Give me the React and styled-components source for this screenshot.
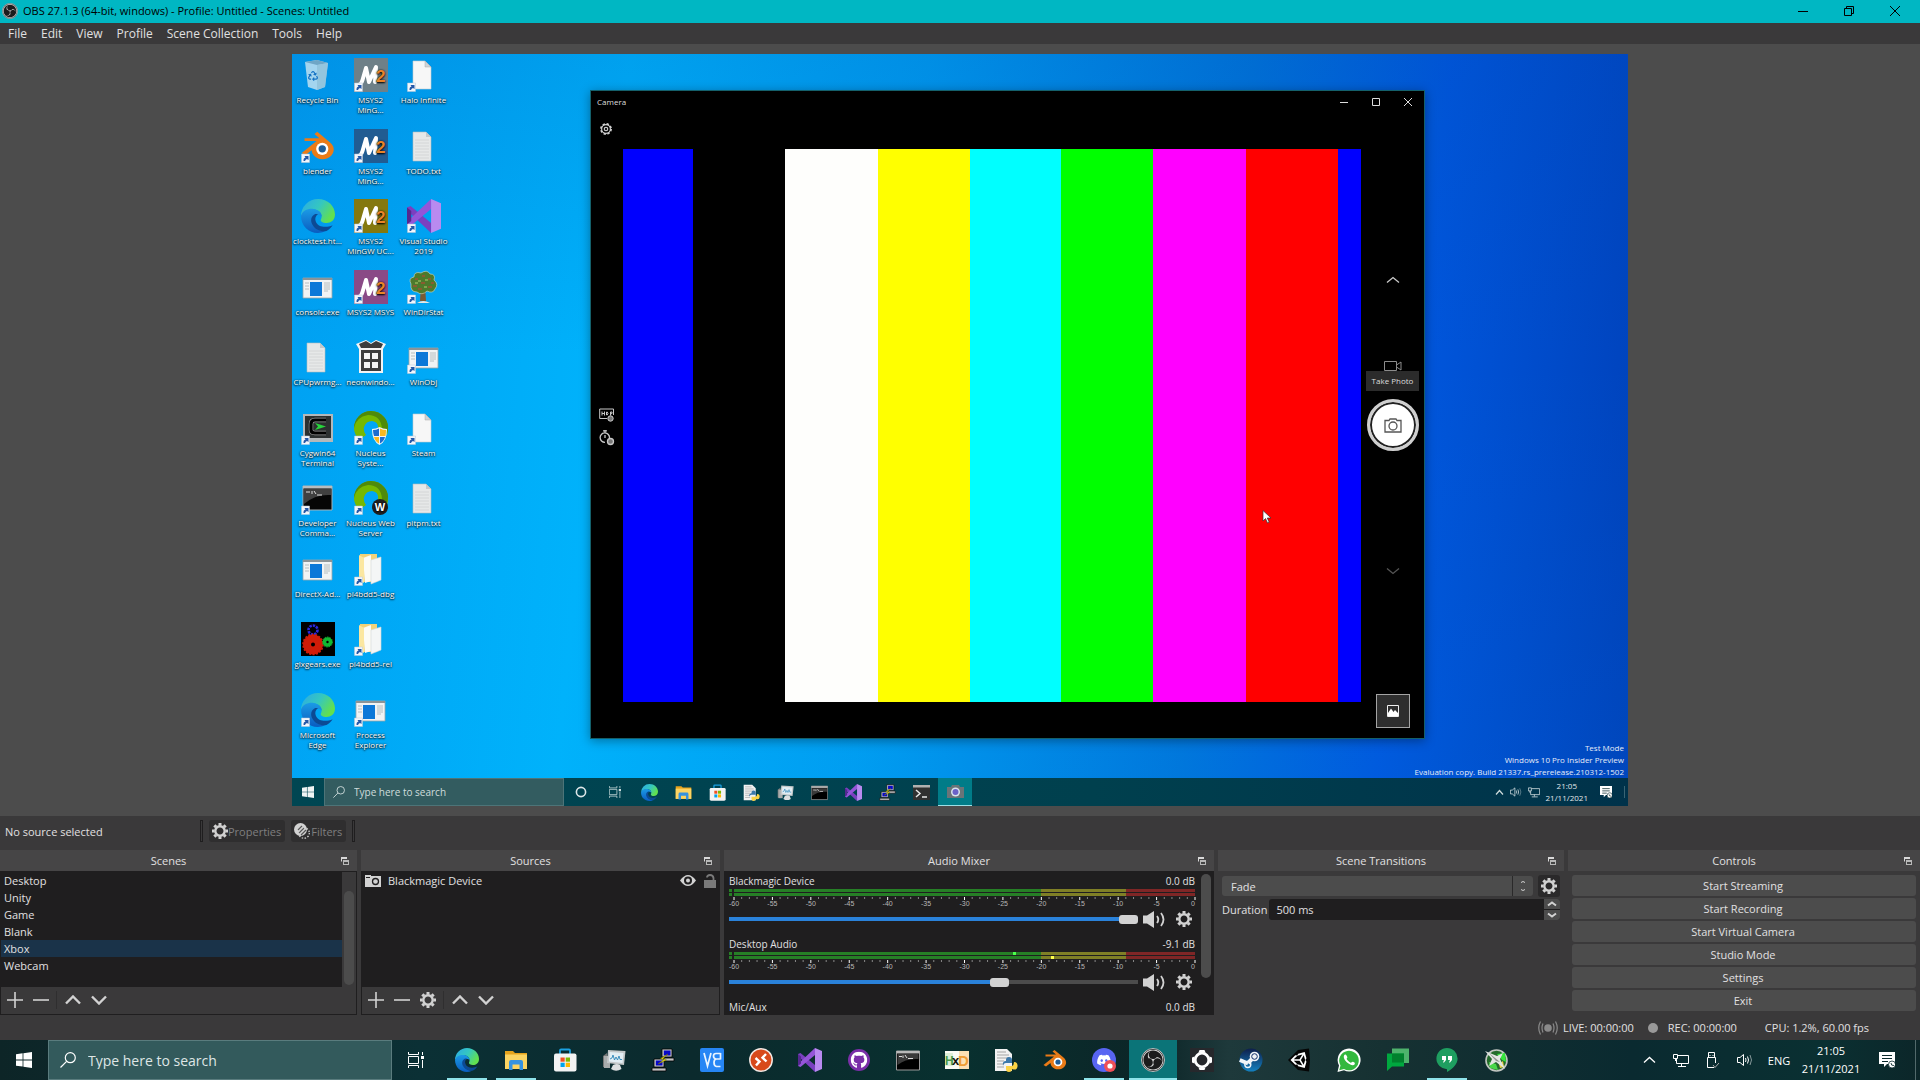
import React from "react";
import styled, { createGlobalStyle, css } from "styled-components";
import { FaGithub, FaSteam, FaUnity, FaDiscord, FaRecycle } from "react-icons/fa";
import { SiObsstudio } from "react-icons/si";

const GlobalStyle = createGlobalStyle`
  * { box-sizing: border-box; }
  body { margin: 0; background: #3a393a; }
  body, button, input, select {
    font-family: "Open Sans", "Noto Sans", sans-serif;
    font-size: 11px;
    line-height: 17px;
  }
  button { border: 0; padding: 0; margin: 0; background: none; color: inherit; }
  input, select { border: 0; margin: 0; }
  svg { display: block; flex: none; }
  ul { list-style: none; margin: 0; padding: 0; }
`;

/* ---------- shared drawings ---------- */

const GearIcon = ({ size = 16, color = "#d2d2d2" }) => (
  <svg width={size} height={size} viewBox="-8 -8 16 16" fill="none" stroke={color}>
    <circle r="4.7" strokeWidth="2.4" />
    {[0, 45, 90, 135, 180, 225, 270, 315].map((a) => (
      <path key={a} d="M0 -5.4V-8" strokeWidth="3" transform={`rotate(${a})`} />
    ))}
  </svg>
);

const ThinGear = () => (
  <svg width="14" height="16" viewBox="-8 -8 16 16" fill="none" stroke="#d0d0d0" strokeWidth="1.3">
    <circle r="5.8" strokeDasharray="2.6 1.95" strokeWidth="2" />
    <circle r="5" />
    <circle r="2" />
  </svg>
);

const Chevron = ({ w = 16, h = 10, down, color = "#d2d2d2", stroke = 2.4 }) => (
  <svg width={w} height={h} viewBox={`0 0 ${w} ${h}`} fill="none" stroke={color} strokeWidth={stroke}>
    <path d={down ? `M1 1.5L${w / 2} ${h - 1.5}L${w - 1} 1.5` : `M1 ${h - 1.5}L${w / 2} 1.5L${w - 1} ${h - 1.5}`} />
  </svg>
);

const PlusIcon = ({ minus }) => (
  <svg width="16" height="16" viewBox="0 0 16 16" stroke="#d2d2d2" strokeWidth="1.6">
    <path d={minus ? "M0 8H16" : "M0 8H16M8 0V16"} />
  </svg>
);

const FloatIcon = () => (
  <svg width="8" height="8" viewBox="0 0 8 8">
    <path d="M0 0H6V2H1V4.5H0Z" fill="#d8d8d8" />
    <path d="M2 3H8V8H2Z" fill="#b8b8b8" />
    <path d="M3 5H7V7H3Z" fill="#444" />
  </svg>
);

const SpeakerIcon = () => (
  <svg width="24" height="17" viewBox="0 0 24 17" fill="#d2d2d2">
    <path d="M0 4.5H4L11 0V17L4 12.5H0Z" />
    <path d="M14 5Q16.5 8.5 14 12M18 2Q23 8.5 18 15" stroke="#d2d2d2" strokeWidth="1.8" fill="none" />
  </svg>
);

const WinLogo = ({ size = 16, color = "#fff" }) => (
  <svg width={size} height={size} viewBox="0 0 16 16" fill={color}>
    <path d="M0 2.2L6.6 1.3V7.5H0ZM7.4 1.2L16 0V7.5H7.4ZM0 8.4H6.6V14.6L0 13.7ZM7.4 8.4H16V16L7.4 14.8Z" />
  </svg>
);

const SearchGlyph = ({ size = 16, color = "#fff" }) => (
  <svg width={size} height={size} viewBox="0 0 16 16" fill="none" stroke={color} strokeWidth="1.2">
    <circle cx="10.3" cy="5.7" r="5" />
    <path d="M6.6 9.3L0.5 15.5" />
  </svg>
);

const TaskView = ({ size = 16, color = "#fff" }) => (
  <svg width={size} height={size} viewBox="0 0 16 16" fill="none" stroke={color} strokeWidth="1">
    <path d="M0.5 4.5H10.5V11.5H0.5ZM0.5 0V2.5H10.5V0M0.5 16V13.5H10.5V16M14.5 0V3M14.5 8V16" />
    <path d="M13 4H16V7H13Z" fill={color} stroke="none" />
  </svg>
);

const EdgeIcon = ({ size = 24 }) => (
  <svg width={size} height={size} viewBox="0 0 24 24">
    <defs>
      <linearGradient id="edgeTop" x1="0" y1="0" x2="1" y2="0.5">
        <stop offset="0" stopColor="#2aa9e8" />
        <stop offset="0.55" stopColor="#35c7c0" />
        <stop offset="1" stopColor="#62e04e" />
      </linearGradient>
      <linearGradient id="edgeBody" x1="0" y1="0" x2="0" y2="1">
        <stop offset="0" stopColor="#1b9be6" />
        <stop offset="1" stopColor="#0a5cc0" />
      </linearGradient>
    </defs>
    <path d="M0 12A12 12 0 0 1 12 0C19 0 24 5 24 11C24 15 21 17 18 17C15.5 17 13.5 16 14 14.5C15.5 12 14 8 10 7.5C5 7 1 10 0 12Z" fill="url(#edgeTop)" />
    <path d="M0 12C1 8 5 6.5 9 7C12.5 7.5 15 10 14.6 12.5C13 10 9 11 8.5 14.5C8 19 12 22.5 17 22.8C9 26.5 0 21 0 12Z" fill="url(#edgeBody)" />
    <path d="M10 10.5C7 12 6.5 15 8 18C10 22 15 23.5 18 22.5C20 21.5 21.5 20 22.3 18.5C18 20.5 12 20 10.5 16C9.7 14 10 12 12 10.5Z" fill="#0c4a94" />
  </svg>
);

const FolderIcon = ({ size = 24 }) => (
  <svg width={size} height={size} viewBox="0 0 24 24">
    <path d="M1 3H9L11 5H23V21H1Z" fill="#e6a31c" />
    <path d="M1 6.5H23V21H1Z" fill="#fcd462" />
    <path d="M5 14Q5 12 7 12H17Q19 12 19 14V22H15.5V16.5H8.5V22H5Z" fill="#3592e0" />
  </svg>
);

const StoreIcon = ({ size = 24 }) => (
  <svg width={size} height={size} viewBox="0 0 24 24">
    <path d="M7 7V2.5Q7 1.5 8 1.5H16Q17 1.5 17 2.5V7" stroke="#1ba1e2" strokeWidth="1.8" fill="none" />
    <rect x="1" y="5.5" width="22.5" height="18" rx="2" fill="#f3f3f3" />
    <path d="M7.5 9.5H11.7V13.7H7.5Z" fill="#f25022" />
    <path d="M12.7 9.5H17V13.7H12.7Z" fill="#7fba00" />
    <path d="M7.5 14.7H11.7V19H7.5Z" fill="#00a4ef" />
    <path d="M12.7 14.7H17V19H12.7Z" fill="#ffb900" />
  </svg>
);

const MonitorIcon = ({ size = 24 }) => (
  <svg width={size} height={size} viewBox="0 0 24 24">
    <path d="M1 8L5 5V20L1 19Z" fill="#777" />
    <path d="M2 8H8V20H2Z" fill="#a9acac" />
    <path d="M6 2L23.5 3L22 17L5 15Z" fill="#c4c8c9" />
    <path d="M7.500 4L21.500 5L20.500 15L7 13.500Z" fill="#e2eef4" />
    <path d="M8 11L10 10L11 7L12.500 12L14 9L15.500 12L17 8L18 11.500H20" stroke="#2c86b8" fill="none" strokeWidth="0.9" />
    <path d="M11 17Q15 15 18 17L19.500 21Q14 24.500 9 21Z" fill="#dcdfe0" />
  </svg>
);

const PuttyIcon = ({ size = 24 }) => (
  <svg width={size} height={size} viewBox="0 0 24 24">
    <path d="M11 1H21V9H11ZM13 10H23V13H13Z" fill="#c4c4c4" stroke="#000" strokeWidth="0.8" />
    <path d="M12.800 2.500H19.500V7.500H12.800Z" fill="#0808c8" />
    <path d="M3 11H13V19H3ZM1 20H15V23H1Z" fill="#c4c4c4" stroke="#000" strokeWidth="0.8" />
    <path d="M4.800 12.500H11.500V17.500H4.800Z" fill="#0808c8" />
    <path d="M17 6L9.500 10.500L13 11.500L7 16L15.500 12L12 10.500Z" fill="#f8ee10" stroke="#6a6400" strokeWidth="0.5" />
  </svg>
);

const VncIcon = () => (
  <svg width="24" height="24" viewBox="0 0 24 24">
    <rect width="24" height="24" rx="2" fill="#2686f5" />
    <path d="M4 5L7.500 18L11 5M20.500 5.500H16Q13.500 5.500 13.500 8T16 11H20.500M20.500 11H16.500Q14 11 14 14.500T16.500 18.500H20.500M20.500 5V11.500" stroke="#e8f4ff" strokeWidth="1.7" fill="none" />
  </svg>
);

const RemoteIcon = () => (
  <svg width="24" height="24" viewBox="0 0 24 24">
    <circle cx="12" cy="12" r="11.2" fill="#d8491a" stroke="#f2e8e4" strokeWidth="1.5" />
    <path d="M6.500 10L10.500 13.500L7 17.500M17 6L13.500 9.700L17.500 13.500" stroke="#fff" strokeWidth="2.4" fill="none" />
  </svg>
);

const VsIcon = ({ size = 24 }) => (
  <svg width={size} height={size} viewBox="0 0 24 24">
    <path d="M0 6L2.500 5L17 17V24L0 8Z" fill="#7a3fc0" />
    <path d="M0 18L2.500 19L17 7V0L0 16Z" fill="#9455d8" />
    <path d="M0 6L3 8.500V15.500L0 18Z" fill="#55288f" />
    <path d="M17 0L24 3V21L17 24Z" fill="#b98af0" />
  </svg>
);

const TerminalIcon = ({ size = 24 }) => (
  <svg width={size} height={size} viewBox="0 0 24 24">
    <path d="M0.5 3H23.500V22H0.500Z" fill="#000" stroke="#9a9a9a" />
    <path d="M0.5 3H23.500V5.500H0.500Z" fill="#b9b9b9" />
    <path d="M1.500 6H22.500V11Q10 10 1.500 17Z" fill="#3a3a3a" />
    <path d="M3 8.500H6M7 7.500V10M9 7L11 10M12 10.500H17" stroke="#ddd" strokeWidth="1" fill="none" />
  </svg>
);

const HxdIcon = () => (
  <svg width="24" height="24" viewBox="0 0 24 24">
    <path d="M0 3H24V21H0Z" fill="#fbfbf4" />
    <path d="M0 5H8V18H0Z" fill="#dcefd8" />
    <path d="M14 3H24V21H14Z" fill="#fbe0b4" />
    <text x="0" y="17" fontSize="12" fontWeight="700" fontFamily="Liberation Sans, sans-serif" fill="#4a9a4c">H</text>
    <text x="7" y="17" fontSize="13" fontWeight="700" fontFamily="Liberation Sans, sans-serif" fill="#16140c">x</text>
    <text x="13" y="18" fontSize="15" fontWeight="700" fontFamily="Liberation Sans, sans-serif" fill="#ee9d35">D</text>
  </svg>
);

const PyFileIcon = ({ size = 24 }) => (
  <svg width={size} height={size} viewBox="0 0 24 24">
    <path d="M1 1H13L18 6V23H1Z" fill="#f2f2f2" />
    <path d="M3 4H12M3 7H15M3 10H15M3 13H10M3 16H10M3 19H10" stroke="#a4a4a4" strokeWidth="1" />
    <path d="M12 12Q12 9 15 9T18 12V15H12Q9.500 15 9 18Q8 13 12 13Z" fill="#3c78aa" />
    <path d="M15 24Q12 24 12 21V18H18Q20 17 20 14Q24 14 23.500 18.500T18 21Q18 24 15 24Z" fill="#fbd244" />
  </svg>
);

const DiscordIcon = () => (
  <svg width="24" height="24" viewBox="0 0 24 24">
    <circle cx="12" cy="12" r="12" fill="#5865f2" />
    <g transform="translate(4.500 4.500)"><FaDiscord size={15} color="#fff" /></g>
    <circle cx="18" cy="18" r="6" fill="#ef4f58" />
    <circle cx="18" cy="18" r="2.6" fill="#fff" />
  </svg>
);

const ObsIcon = ({ size = 24 }) => (
  <svg width={size} height={size} viewBox="0 0 24 24">
    <circle cx="12" cy="12" r="11.5" fill="#1c1b1c" stroke="#e0e0e0" strokeWidth="0.8" />
    <g transform="translate(1.500 1.500)"><SiObsstudio size={21} color="#d4d4d4" /></g>
  </svg>
);

const KnotIcon = () => (
  <svg width="24" height="24" viewBox="-12 -12 24 24">
    <path d="M-12 -12H12V12H-12Z" fill="#26282c" />
    <circle r="6.8" fill="none" stroke="#fff" strokeWidth="2.8" />
    {[0, 90, 180, 270].map((a) => (
      <path key={a} d="M-3.500 -7.500L-2.500 -10H2.500L3.500 -7.500Z" fill="#fff" transform={`rotate(${a})`} />
    ))}
  </svg>
);

const SteamIcon = () => (
  <svg width="24" height="24" viewBox="0 0 24 24">
    <defs>
      <linearGradient id="steamBg" x1="0" y1="0" x2="0" y2="1">
        <stop offset="0" stopColor="#0e1f4c" />
        <stop offset="1" stopColor="#1481c0" />
      </linearGradient>
    </defs>
    <circle cx="12" cy="12" r="11.5" fill="url(#steamBg)" />
    <path d="M0.800 12L9 15.500M9 15L15.500 8.500" stroke="#f0f4f8" strokeWidth="4" />
    <circle cx="15.500" cy="8.500" r="4.800" fill="#f0f4f8" />
    <circle cx="15.500" cy="8.500" r="2.800" fill="#f0f4f8" stroke="#12306a" strokeWidth="1" />
    <circle cx="8.800" cy="16.500" r="3" fill="none" stroke="#f0f4f8" strokeWidth="1.4" />
  </svg>
);

const UnityIcon = () => (
  <svg width="24" height="24" viewBox="0 0 24 24">
    <path d="M0 12L10 2L21 0.500L22 12L21 23.500L10 22Z" fill="#050505" />
    <g transform="translate(2 2.500)"><FaUnity size={19} color="#fff" /></g>
  </svg>
);

const WhatsIcon = () => (
  <svg width="24" height="24" viewBox="0 0 24 24">
    <path d="M0.500 24L2 17.500A11.500 11.500 0 1 1 7 22.300Z" fill="#fff" />
    <path d="M2.200 22.300L3.500 17.500A9.800 9.800 0 1 1 7 21Z" fill="#33b83e" />
    <path d="M8 6.500C6 7.500 6.500 11 9.500 14S16.500 18 17.500 16.500C18.500 15 17.500 14.500 16 13.800C15 13.300 14.500 15 13.700 14.700C12 14 10.300 12.300 9.700 11C9.500 10.300 10.700 9.800 10.300 9C9.500 7.300 9 6 8 6.500Z" fill="#fff" />
  </svg>
);

const ChatIcon = () => (
  <svg width="24" height="24" viewBox="0 0 24 24">
    <path d="M6 0.500H23V15H8L6 13Z" fill="#4eb36c" />
    <path d="M1 5.500H18V18.500H6L1 23Z" fill="#00a83f" />
    <path d="M6 5.500H18V14.500H6Z" fill="#00812d" />
  </svg>
);

const HangoutsIcon = () => (
  <svg width="24" height="24" viewBox="0 0 24 24">
    <path d="M12 0A10.600 10.600 0 1 0 12 21.200V24C18 21 22.600 16 22.600 10.600A10.600 10.600 0 0 0 12 0Z" fill="#1e9e60" />
    <path d="M7 8H11V12L9 14.500H8L9 12H7ZM13 8H17V12L15 14.500H14L15 12H13Z" fill="#fff" />
  </svg>
);

const JetIcon = () => (
  <svg width="24" height="24" viewBox="0 0 24 24">
    <circle cx="12.500" cy="12.500" r="10.500" fill="#246b2c" stroke="#c2c6c2" strokeWidth="1.6" />
    <path d="M13 6L21 5L22 14L18 12Z" fill="#35e63c" />
    <path d="M5 14L12 16L14 22L6 20Z" fill="#48d848" />
    <path d="M15 16L19 13L20 19L16 20Z" fill="#f0d34a" />
    <path d="M1 3L13 8L19 5L16 11L21 21L12 14L5 18L8 11Z" fill="#e2e6e2" />
    <path d="M5 5L16 14L12 13Z" fill="#8d928d" />
  </svg>
);

const BlenderIcon = ({ size = 24 }) => (
  <svg width={size} height={size} viewBox="0 0 24 24">
    <path d="M0.500 17L11 8.500H2.500V6.500H13L9.500 3.500L11.500 2L20.500 9.500A7.800 6.800 0 1 1 7.500 15L3 18.500Z" fill="#ea7b17" />
    <circle cx="15" cy="14" r="4.3" fill="#fff" />
    <circle cx="15" cy="14" r="2.6" fill="#1f5d96" />
  </svg>
);

/* ---------- desktop icon drawings (34 x 34) ---------- */

const ShortcutArrow = () => (
  <g>
    <path d="M0.500 25H8.500V33.500H0.500Z" fill="#f2f6fb" stroke="#b8c4d4" strokeWidth="0.5" />
    <path d="M2.500 32C2.500 29.500 3 29 4.500 28.500L3.500 27H7.500V31L6 30Q4.500 30.500 4 32Z" fill="#2458a8" />
  </g>
);

const pics = {
  bin: (
    <g>
      <path d="M4 4L16 2L27 5L24 29L16 32L7 29Z" fill="#b5dcf0" opacity="0.9" />
      <path d="M4 4L16 7L27 5L16 2Z" fill="#6fa6c6" />
      <path d="M16 7V32L24 29L27 5Z" fill="#8fc0da" opacity="0.8" />
      <g transform="translate(7 13)"><FaRecycle size={10} color="#1472c4" /></g>
    </g>
  ),
  page: (
    <g>
      <path d="M6 3H18L24 9V31H6Z" fill="#f7f7f7" stroke="#c4ccd2" strokeWidth="0.6" />
      <path d="M18 3V9H24Z" fill="#cfd3d6" stroke="#aaa" strokeWidth="0.5" />
    </g>
  ),
  text: (
    <g>
      <path d="M6 3H19L24 8V32H6Z" fill="#e6e8e8" stroke="#b4bcc0" strokeWidth="0.6" />
      <path d="M19 3V8H24Z" fill="#c4c8ca" />
      <path d="M8 11H22M8 14H22M8 17H22M8 20H22M8 23H22M8 26H22M8 29H22" stroke="#cfd2d3" strokeWidth="0.8" />
    </g>
  ),
  app: (
    <g>
      <path d="M2 8H31V28H2Z" fill="#f1f3f4" stroke="#9aa4aa" strokeWidth="0.8" />
      <path d="M2 8H31V10H2Z" fill="#8c9498" />
      <path d="M9 12H21V26H9Z" fill="#0c78d8" />
      <path d="M4 13H8M4 16H8M4 19H8M23 13H29M23 15H29M23 17H29M23 19H29M23 21H27" stroke="#a8b0b4" strokeWidth="0.8" />
    </g>
  ),
  gift: (
    <g>
      <path d="M2 4L12 0L17 3L22 0L32 4L29 9V33H5V9Z" fill="#f4f4f4" />
      <path d="M5 4L12 1L17 4L22 1L29 4L27 8H7ZM7 10H27V31H7Z" fill="#3c3c3c" />
      <path d="M10 13H16V19H10ZM18 13H24V19H18ZM10 22H16V28H10ZM18 22H24V28H18Z" fill="#f4f4f4" />
    </g>
  ),
  cygwin: (
    <g>
      <path d="M2 3H32V31H2Z" fill="#b4b8ba" />
      <path d="M4 5H30V27H4Z" fill="#2c3030" />
      <path d="M25 9H14Q10 9 10 13V19Q10 22 14 22H25" stroke="#999" strokeWidth="4.4" fill="none" />
      <path d="M25 9H14Q10 9 10 13V19Q10 22 14 22H25" stroke="#000" strokeWidth="3.2" fill="none" />
      <path d="M14 12L25 15.500L14 19L17 15.500Z" fill="#28d43c" />
    </g>
  ),
  cmd: (
    <g>
      <path d="M2 5H31V29H2Z" fill="#060606" stroke="#a8b0b4" />
      <path d="M2 5H31V7.500H2Z" fill="#b8bcbe" />
      <path d="M3 8H30V14Q14 13 3 23Z" fill="#404040" />
      <path d="M5 11H9M11 10V13M13 10L15 13M16 14H21" stroke="#ddd" fill="none" />
    </g>
  ),
  folder: (
    <g>
      <path d="M6 2H23V30H6Z" fill="#f2d27a" />
      <path d="M9 6L17 3V29L11 31Z" fill="#fbfbf6" />
      <path d="M17 8L27 5V28L17 32Z" fill="#f4f6f6" stroke="#d4d8d8" strokeWidth="0.6" />
      <path d="M5 3L10 6V31L5 28Z" fill="#fbe7a0" />
    </g>
  ),
  gears: (
    <g>
      <path d="M0 0H34V34H0Z" fill="#000" />
      <circle cx="12" cy="8" r="4.5" fill="none" stroke="#2a2ae0" strokeWidth="2.6" strokeDasharray="2.4 1" />
      <circle cx="12" cy="22.500" r="6" fill="none" stroke="#d01c08" strokeWidth="8" />
      <circle cx="12" cy="22.500" r="10" fill="none" stroke="#d01c08" strokeWidth="1.6" strokeDasharray="2 1.5" />
      <circle cx="26.500" cy="20" r="3" fill="none" stroke="#12b832" strokeWidth="3.6" />
      <circle cx="26.500" cy="20" r="5" fill="none" stroke="#12b832" strokeWidth="1" strokeDasharray="1.5 1" />
    </g>
  ),
  tree: (
    <g>
      <path d="M14 16H18L19 31H13Z" fill="#7a5a34" />
      <path d="M10 33Q16 29 23 33Z" fill="#e8e8e4" />
      <path d="M4 14Q1 8 7 7Q7 1 14 3Q20 -1 23 4Q29 4 27 10Q32 14 28 19Q26 24 20 21Q15 26 10 22Q3 22 4 14Z" fill="#4d7a2c" stroke="#d8dcc0" strokeWidth="0.6" />
      <path d="M8 9H11M15 6H18M21 9H24M6 16H10M14 13H18M21 17H25M11 19H15M24 13H27" stroke="#8a5c30" strokeWidth="1.8" />
      <path d="M11 11H14M18 10H21M17 17H20M8 13H11" stroke="#8fb457" strokeWidth="1.5" />
    </g>
  ),
};

const Msys = ({ color }) => (
  <g>
    <path d="M0 0H34V34H0Z" fill={color} />
    <path d="M4 27Q7 27 8.500 22L12 10L15 24L22 9L21 24" stroke="#fff" strokeWidth="4" fill="none" strokeLinejoin="round" strokeLinecap="round" />
    <text x="22" y="24" fontSize="17" fontWeight="700" fontFamily="Liberation Sans, sans-serif" fill="#e88428">2</text>
  </g>
);

const Nucleus = ({ shield }) => (
  <g>
    <path d="M17 0A17 17 0 0 0 5 29L12 24Q9 20 10 16Q12 10 18 10Q25 11 24 18L29 22L33 24Q36 14 30 6Q25 0 17 0Z" fill="#76b900" />
    <path d="M17 0A17 17 0 0 0 0 17Q2 6 14 4Q27 4 28 18L33 22Q36 12 30 6Q25 0 17 0Z" fill="#4f8a0a" />
    {shield ? (
      <g>
        <path d="M18 18Q22 18 25.500 16Q29 18 33 18Q33 30 25.500 34Q18 30 18 18Z" fill="#f4f4f4" />
        <path d="M19 19Q22 19 25 17.500V25H20Q19 22 19 19ZM26 26H31Q30 30 26 32.500Z" fill="#1c6cd0" />
        <path d="M26 17.500Q29 19 32 19Q32 22 31.500 25H26ZM20 26H25V32.500Q21 30 20 26Z" fill="#f8b820" />
      </g>
    ) : (
      <g>
        <circle cx="26" cy="26" r="8" fill="#202020" />
        <text x="26" y="30" textAnchor="middle" fontSize="11" fontWeight="700" fontFamily="Liberation Sans, sans-serif" fill="#fff">W</text>
      </g>
    )}
  </g>
);

const picture = (kind) => {
  if (kind.startsWith("#")) return <Msys color={kind} />;
  if (kind === "edge") return <EdgeIcon size={34} />;
  if (kind === "vs") return <VsIcon size={34} />;
  if (kind === "blender") return <BlenderIcon size={34} />;
  if (kind === "nucShield") return <Nucleus shield />;
  if (kind === "nucWeb") return <Nucleus />;
  return pics[kind];
};

const desktopItems = [
  ["Recycle Bin", "bin", 0], ["blender", "blender", 1], ["clocktest.ht...", "edge", 0], ["console.exe", "app", 0],
  ["CPUpwrmg...", "text", 0], ["Cygwin64\nTerminal", "cygwin", 1], ["Developer\nComma...", "cmd", 1],
  ["DirectX-Ad...", "app", 0], ["glxgears.exe", "gears", 0], ["Microsoft\nEdge", "edge", 1],
  ["MSYS2\nMinG...", "#6e8088", 1], ["MSYS2\nMinG...", "#215c92", 1], ["MSYS2\nMinGW UC...", "#84780f", 1],
  ["MSYS2 MSYS", "#8a4a86", 1], ["neonwindo...", "gift", 0], ["Nucleus\nSyste...", "nucShield", 1],
  ["Nucleus Web\nServer", "nucWeb", 1], ["pi4bdd5-dbg", "folder", 1], ["pi4bdd5-rel", "folder", 1],
  ["Process\nExplorer", "app", 1],
  ["Halo Infinite", "page", 1], ["TODO.txt", "text", 0], ["Visual Studio\n2019", "vs", 1], ["WinDirStat", "tree", 1],
  ["WinObj", "app", 1], ["Steam", "page", 1], ["pitpm.txt", "text", 0],
];

/* ---------- main window ---------- */

const Screen = styled.div`
  display: flex;
  flex-direction: column;
  min-height: 100vh;
  color: #e1e0e1;
  background: #3a393a;
  overflow: hidden;
`;

const TitleBar = styled.header`
  display: flex;
  align-items: center;
  height: 23px;
  padding: 0 2px 2px;
  background: #00b7c3;
  color: #000;
`;

const TitleText = styled.span`
  flex: 1;
  padding-left: 5px;
`;

const WindowButton = styled.button`
  display: flex;
  align-items: center;
  justify-content: center;
  width: ${(p) => (p.$small ? "32px" : "46px")};
  height: 20px;
`;

const MenuBar = styled.nav`
  display: flex;
  height: 21px;
  background: #3a393a;
`;

const MenuItem = styled.button`
  padding: 0 6px 0 8px;
  font-size: 12px;
`;

const Preview = styled.main`
  display: flex;
  flex: 1;
  justify-content: center;
  padding: 10px;
  background: #4c4c4c;
`;

const Canvas = styled.div`
  display: flex;
  flex: 0 1 1336px;
  flex-direction: column;
  position: relative;
  overflow: hidden;
  background:
    linear-gradient(180deg, rgba(0, 70, 170, 0.16), rgba(0, 180, 255, 0) 40%, rgba(0, 180, 255, 0.06)),
    linear-gradient(96deg, #00a0f2 0%, #00b2fb 24%, #009cf0 45%, #0074da 68%, #0056dc 82%, #0040b8 100%);
`;

const IconGrid = styled.ul`
  flex: 1;
  display: grid;
  grid-auto-flow: column;
  grid-template-rows: repeat(10, minmax(0, 1fr));
  grid-auto-columns: 53px;
  justify-content: start;
  padding: 4px 0 15px;
  min-height: 0;
`;

const IconCell = styled.li`
  display: flex;
  flex-direction: column;
  align-items: center;
  gap: 3px;
  width: 51px;
  font-size: 8px;
  line-height: 10px;
  text-align: center;
  white-space: pre;
  color: #fff;
  text-shadow: 0 1px 2px #000, 0 0 2px rgba(0, 0, 0, 0.8);
`;

const Watermark = styled.p`
  position: absolute;
  right: 4px;
  bottom: 28px;
  margin: 0;
  font-size: 8px;
  line-height: 12px;
  text-align: right;
  color: #e6ecf8;
  white-space: pre-line;
`;

const CameraWindow = styled.section`
  position: absolute;
  left: 298px;
  top: 36px;
  width: 835px;
  height: 649px;
  display: grid;
  grid-template: 58px 1fr 37px / 32px 1fr 63px;
  background: #000;
  border: 1px solid #14606c;
  box-shadow: 0 2px 10px rgba(0, 0, 0, 0.35);
  color: #ddd;
`;

const CameraTop = styled.div`
  grid-column: 1 / -1;
  display: flex;
  flex-direction: column;
  gap: 8px;
`;

const CameraTitle = styled.div`
  display: flex;
  align-items: center;
  height: 22px;
  padding-left: 6px;
  font-size: 8px;
  line-height: 10px;
`;

const Grow = styled.span`
  flex: 1;
`;

const CameraSide = styled.div`
  display: flex;
  flex-direction: column;
  align-items: ${(p) => (p.$left ? "flex-start" : "center")};
  ${(p) =>
    p.$left &&
    css`
      justify-content: center;
      gap: 8px;
      padding: 0 0 24px 8px;
    `}
`;

const SideButton = styled.button`
  display: flex;
  align-items: center;
  justify-content: center;
`;

const GearSlot = styled(SideButton)`
  margin-left: 8px;
  align-self: flex-start;
`;

const ColourBars = styled.div`
  display: flex;
  height: 553px;
`;

const Bar = styled.span`
  flex: ${(p) => p.$w} 0 0;
  background: ${(p) => p.$c};
`;

const Tooltip = styled.span`
  padding: 5px 6px;
  background: #2b2b2b;
  font-size: 8px;
  line-height: 10px;
  white-space: nowrap;
`;

const Shutter = styled.button`
  display: flex;
  align-items: center;
  justify-content: center;
  width: 52px;
  height: 52px;
  margin: 8px 0 0;
  border: 3px solid #cfcfcf;
  border-radius: 50%;
  background: #fff;
  box-shadow: inset 0 0 0 2px #222;
`;

const Spacer = styled.span`
  height: ${(p) => p.$h}px;
  flex: none;
`;

const Thumb = styled.button`
  display: flex;
  align-items: center;
  justify-content: center;
  width: 34px;
  height: 34px;
  flex: none;
  border: 1px solid #a4a4a4;
  background: #2e2e2e;
`;

const Pointer = styled.svg`
  position: absolute;
  left: 970px;
  top: 456px;
`;

const InnerTaskbar = styled.footer`
  display: flex;
  height: 28px;
  background: linear-gradient(90deg, #004652, #00404e 60%, #00324a);
`;

const InnerItem = styled.button`
  display: flex;
  align-items: center;
  justify-content: center;
  width: 34px;
  ${(p) =>
    p.$active &&
    css`
      background: #007c88;
      border-bottom: 1px solid #9adfe6;
    `}
`;

const InnerStart = styled(InnerItem)`
  width: 32px;
`;

const InnerSearch = styled.label`
  display: flex;
  align-items: center;
  gap: 9px;
  width: 240px;
  padding-left: 8px;
  background: #335c60;
  border: 1px solid #4d7478;
`;

const InnerInput = styled.input`
  flex: 1;
  min-width: 0;
  padding: 0;
  background: none;
  font-size: 10px;
  &::placeholder { color: #cfdcdc; opacity: 1; }
`;

const InnerTray = styled.div`
  display: flex;
  align-items: center;
  margin-left: auto;
  gap: 6px;
  padding-right: 3px;
`;

const InnerClock = styled.span`
  font-size: 8px;
  line-height: 12px;
  text-align: center;
  color: #e0e8ea;
  white-space: pre-line;
`;

const InnerNote = styled.span`
  padding: 0 12px 0 6px;
  border-right: 1px solid #3a6474;
`;

const ContextBar = styled.div`
  display: flex;
  align-items: center;
  height: 34px;
  padding: 0 0 4px 5px;
`;

const ContextLabel = styled.span`
  width: 195px;
`;

const Divider = styled.span`
  width: 3px;
  height: 22px;
  border: 1px solid #1f1e1f;
`;

const ContextButton = styled.button`
  display: flex;
  align-items: center;
  height: 22px;
  margin: 0 0 0 6px;
  padding: 0 4px 0 3px;
  border-radius: 3px;
  background: #2f2e2f;
  color: #7f7f7f;
  & + & { margin-right: 6px; }
`;

const Docks = styled.div`
  display: grid;
  grid-template-columns: minmax(0, 357fr) minmax(0, 359fr) minmax(0, 490fr) minmax(0, 346fr) minmax(0, 352fr);
  gap: 4px;
  height: 165px;
`;

const Dock = styled.section`
  display: flex;
  flex-direction: column;
  min-height: 0;
`;

const DockTitle = styled.h2`
  display: flex;
  align-items: center;
  height: 21px;
  margin: 0;
  padding-right: 8px;
  background: #464546;
  font-size: 11px;
  font-weight: 400;
`;

const DockName = styled.span`
  flex: 1;
  text-align: center;
  padding-right: 4px;
`;

const ListBox = styled.div`
  display: flex;
  flex: 1;
  min-height: 0;
  flex-direction: column;
  border: 1px solid #1f1e1f;
  background: #1f1e1f;
`;

const ListArea = styled.div`
  display: flex;
  flex: 1;
  min-height: 0;
`;

const List = styled.ul`
  flex: 1;
`;

const SceneItem = styled.li`
  height: 17px;
  padding-left: 3px;
  background: ${(p) => (p.$on ? "#1a3349" : "transparent")};
`;

const ScrollTrack = styled.div`
  width: 14px;
  padding: 19px 2px 2px;
  background: #3a393a;
`;

const ScrollThumb = styled.div`
  width: 10px;
  height: 94px;
  border-radius: 5px;
  background: #4c4c4c;
`;

const Toolbar = styled.div`
  display: flex;
  align-items: flex-start;
  height: 27px;
  padding-left: 1px;
  background: #3a393a;
`;

const ToolButton = styled.button`
  display: flex;
  align-items: center;
  justify-content: center;
  width: 26px;
  height: 26px;
`;

const ToolSep = styled.span`
  width: 1px;
  height: 18px;
  margin: 4px 3px 0 2px;
  background: #2f2e2f;
`;

const SourceRow = styled.li`
  display: flex;
  align-items: center;
  height: 17px;
  padding: 0 2px 0 3px;
  gap: 7px;
`;

const SourceName = styled.span`
  flex: 1;
`;

const Mixer = styled.div`
  display: flex;
  flex: 1;
  min-height: 0;
  overflow: hidden;
  background: #1f1e1f;
  padding: 3px 3px 0 5px;
  gap: 6px;
`;

const Channels = styled.div`
  flex: 1;
  min-width: 0;
`;

const Channel = styled.div`
  height: 63px;
  font-size: 10px;
  line-height: 15px;
`;

const ChannelHead = styled.div`
  display: flex;
  justify-content: space-between;
`;

const Meter = styled.div`
  display: flex;
  position: relative;
  height: 3px;
  margin-bottom: 1px;
`;

const MeterPart = styled.span`
  flex: ${(p) => p.$w} 0 0;
  background: ${(p) => p.$c};
`;

const MeterStart = styled.span`
  width: 3px;
  margin-right: 2px;
  background: #267f26;
`;

const Peak = styled.span`
  position: absolute;
  top: 0;
  width: 3px;
  height: 3px;
  background: ${(p) => p.$c};
`;

const Scale = styled.svg`
  margin-left: 5px;
  width: calc(100% - 5px);
  overflow: visible;
`;

const FaderRow = styled.div`
  display: flex;
  align-items: center;
  height: 18px;
  margin-top: 3px;
  gap: 5px;
`;

const Fader = styled.input`
  appearance: none;
  flex: 1;
  min-width: 0;
  height: 10px;
  background: linear-gradient(#2a82da, #2a82da) 0 50% / ${(p) => p.$v}% 4px no-repeat,
    linear-gradient(#4c4c4c, #4c4c4c) 0 50% / 100% 4px no-repeat;
  &::-webkit-slider-thumb {
    appearance: none;
    width: 19px;
    height: 9px;
    border-radius: 3px;
    background: #d2d2d2;
  }
`;

const IconButton = styled.button`
  display: flex;
  width: ${(p) => p.$w}px;
`;

const MixerThumb = styled(ScrollThumb)`
  height: 104px;
`;

const Panel = styled.div`
  display: flex;
  flex-direction: column;
  gap: 2px;
  padding: 4px;
`;

const PanelRow = styled.div`
  display: flex;
  align-items: center;
  gap: ${(p) => p.$gap}px;
`;

const SelectWrap = styled.div`
  position: relative;
  display: flex;
  flex: 1;
`;

const Select = styled.select`
  appearance: none;
  flex: 1;
  height: 20px;
  padding: 0 9px;
  border-radius: 3px;
  background: #4c4c4c;
  color: #e1e0e1;
`;

const SelectArrows = styled.span`
  position: absolute;
  right: 0;
  top: 0;
  display: flex;
  flex-direction: column;
  align-items: center;
  justify-content: center;
  gap: 4px;
  width: 21px;
  height: 20px;
  border-left: 1px solid #2a292a;
  pointer-events: none;
`;

const DarkButton = styled.button`
  display: flex;
  align-items: center;
  justify-content: center;
  width: 22px;
  height: 22px;
  border-radius: 3px;
  background: #2a292a;
`;

const Duration = styled.div`
  display: flex;
  flex: 1;
  border-radius: 3px;
  overflow: hidden;
  background: #1f1e1f;
`;

const DurationInput = styled.input`
  flex: 1;
  min-width: 0;
  height: 21px;
  padding: 0 7px;
  background: none;
  color: #e1e0e1;
`;

const Spin = styled.div`
  display: flex;
  flex-direction: column;
  gap: 1px;
  width: 16px;
`;

const SpinButton = styled.button`
  display: flex;
  flex: 1;
  align-items: center;
  justify-content: center;
  background: #4c4c4c;
`;

const ControlButton = styled.button`
  height: 21px;
  padding-right: 2px;
  border-radius: 3px;
  background: #4c4c4c;
  color: #e1e0e1;
`;

const StatusBar = styled.div`
  display: flex;
  align-items: center;
  justify-content: flex-end;
  height: 25px;
  padding-right: 51px;
`;

const StatusItem = styled.span`
  display: flex;
  align-items: center;
  gap: ${(p) => p.$gap || 5}px;
  margin-right: ${(p) => p.$after || 0}px;
`;

/* ---------- taskbar ---------- */

const Taskbar = styled.footer`
  display: flex;
  height: 40px;
  background: linear-gradient(90deg, #0d2527 0, #0b3035 22%, #0b2a2d 36%, #08302f 50%, #0c2527 60%, #1e393b 64%, #163132 72%, #0a2a30 85%, #0a3032 95%, #0c2629 100%);
`;

const StartButton = styled.button`
  display: flex;
  align-items: center;
  justify-content: center;
  width: 48px;
`;

const Search = styled.label`
  display: flex;
  align-items: center;
  width: 344px;
  gap: 12px;
  padding: 0 11px;
  background: #335a5c;
  border: 1px solid #5a7c7e;
`;

const SearchInput = styled.input`
  flex: 1;
  padding: 0;
  background: none;
  font-size: 14px;
  &::placeholder { color: #dfe6e6; opacity: 1; }
`;

const Pins = styled.div`
  display: flex;
  flex: 1;
  gap: 1px;
  padding-left: 3px;
`;

const Pin = styled.button`
  display: flex;
  align-items: center;
  justify-content: center;
  position: relative;
  width: 48px;
  background: ${(p) => (p.$state === "active" ? "#0b7478" : "none")};
  &::after {
    content: "";
    display: ${(p) => (p.$state ? "block" : "none")};
    position: absolute;
    bottom: 0;
    left: ${(p) => (p.$state === "active" ? 0 : 4)}px;
    right: ${(p) => (p.$state === "active" ? 0 : 4)}px;
    height: 2px;
    background: #8fe3ea;
  }
`;

const Tray = styled.div`
  display: flex;
  align-items: center;
  color: #fff;
`;

const TrayButton = styled.button`
  display: flex;
  align-items: center;
  justify-content: center;
  width: ${(p) => p.$w || 32}px;
  height: 40px;
`;

const Clock = styled.span`
  width: 68px;
  line-height: 18px;
  text-align: center;
  white-space: pre-line;
`;

const ShowDesktop = styled.button`
  width: 5px;
  height: 40px;
  margin-left: 6px;
  border-left: 1px solid #52696b;
`;

const TrayNet = ({ size = 16, color = "#fff" }) => (
  <svg width={size} height={size} viewBox="0 0 16 16" fill="none" stroke={color} strokeWidth="1">
    <path d="M5 3.500H15.500V11.500H3.500V7M8.500 11.500V14M5 14.500H13M0.500 2.500H4.500V6.500H0.500ZM2.500 6.500V9" />
  </svg>
);

const TraySound = ({ size = 16, color = "#fff" }) => (
  <svg width={size} height={size} viewBox="0 0 16 16" fill="none" stroke={color} strokeWidth="1">
    <path d="M0.500 5.500H3L6.500 2.500V13.500L3 10.500H0.500ZM8.500 6Q9.500 8 8.500 10M10.500 4.500Q12.500 8 10.500 11.500" />
    <path d="M13 3Q16 8 13 13" opacity="0.5" />
  </svg>
);

const TrayNote = ({ size = 16, color = "#fff" }) => (
  <svg width={size} height={size} viewBox="0 0 16 16" fill={color}>
    <path d="M0 0H16V12H8L5 15V12H0Z" />
    <path d="M3 3.500H13M3 6.500H13M3 9.500H9" stroke="#0b2a2d" strokeWidth="1" />
    <circle cx="13" cy="12.500" r="3.5" stroke="#0b2a2d" strokeWidth="0.8" />
    <path d="M12 11Q12 14 15 13.500" stroke="#0b2a2d" strokeWidth="0.9" fill="none" />
  </svg>
);

const channels = [
  { name: "Blackmagic Device", db: "0.0 dB", value: 100, peaks: [] },
  { name: "Desktop Audio", db: "-9.1 dB", value: 67, peaks: [["61%", "#4cff4c"], ["69%", "#ffff4c"]] },
];

const MixerChannel = ({ name, db, value, peaks }) => (
  <Channel>
    <ChannelHead><label htmlFor={`fader-${name}`}>{name}</label><span>{db}</span></ChannelHead>
    {[0, 1].map((n) => (
      <Meter key={n}>
        <MeterStart />
        <MeterPart $w={40} $c="#267f26" />
        <MeterPart $w={11} $c="#7f7f26" />
        <MeterPart $w={9} $c="#7f2626" />
        {peaks[n] && <Peak $c={peaks[n][1]} style={{ left: peaks[n][0] }} />}
      </Meter>
    ))}
    <Scale height="10">
      {Array.from({ length: 61 }, (_, i) => {
        const major = i % 5 === 0;
        const x = `${(i / 60) * 100}%`;
        return <line key={i} x1={x} x2={x} y1="0" y2={major ? 3 : 2} stroke={major ? "#fff" : "#888"} strokeWidth={1} />;
      })}
      {Array.from({ length: 13 }, (_, i) => (
        <text key={i} x={`${(i / 12) * 100}%`} y="9" textAnchor={i === 12 ? "end" : "middle"} fontSize="7" fontFamily="Liberation Sans, sans-serif" fill="#b8b8b8">
          {i === 12 ? "0" : String(i * 5 - 60)}
        </text>
      ))}
    </Scale>
    <FaderRow>
      <Fader id={`fader-${name}`} type="range" min="0" max="100" defaultValue={value} $v={value} />
      <IconButton $w={28} aria-label={`Mute ${name}`}><SpeakerIcon /></IconButton>
      <IconButton $w={19} aria-label={`${name} settings`}><GearIcon /></IconButton>
    </FaderRow>
  </Channel>
);

const DockHeader = ({ children }) => (
  <DockTitle>
    <DockName>{children}</DockName>
    <SideButton aria-label={`Undock ${children}`}><FloatIcon /></SideButton>
  </DockTitle>
);

const bars = [
  [70, "#0000fe"], [92, "#000"], [93, "#fefefc"], [92, "#ffff00"], [92, "#00ffff"],
  [92, "#00ff00"], [93, "#ff00ff"], [92, "#ff0000"], [23, "#0000fe"],
];

const pins = [
  ["Edge", <EdgeIcon />, "open"], ["Explorer", <FolderIcon />, "open"], ["Store", <StoreIcon />],
  ["Task Manager", <MonitorIcon />], ["PuTTY", <PuttyIcon />], ["VNC", <VncIcon />], ["Remote Desktop", <RemoteIcon />],
  ["Visual Studio", <VsIcon />],
  ["GitHub", (
    <svg width="24" height="24" viewBox="0 0 24 24">
      <circle cx="12" cy="12" r="11" fill="#7a2fa8" />
      <g transform="translate(3.500 3.500)"><FaGithub size={17} color="#fff" /></g>
    </svg>
  )],
  ["Command Prompt", <TerminalIcon />], ["HxD", <HxdIcon />], ["Python", <PyFileIcon />], ["Blender", <BlenderIcon />],
  ["Discord", <DiscordIcon />, "open"], ["OBS", <ObsIcon />, "active"], ["Launcher", <KnotIcon />], ["Steam", <SteamIcon />],
  ["Unity", <UnityIcon />], ["WhatsApp", <WhatsIcon />], ["Chat", <ChatIcon />], ["Hangouts", <HangoutsIcon />, "open"],
  ["Afterburner", <JetIcon />],
];

const CameraGlyph = () => (
  <svg width="18" height="15" viewBox="0 0 18 15" fill="none" stroke="#555" strokeWidth="1.3">
    <path d="M1 2.500H5L6 1H12L13 2.500H17V14H1Z" />
    <circle cx="9" cy="8" r="4" />
  </svg>
);

export default function App() {
  return (
    <Screen>
      <GlobalStyle />
      <TitleBar>
        <ObsIcon size={16} />
        <TitleText>OBS 27.1.3 (64-bit, windows) - Profile: Untitled - Scenes: Untitled</TitleText>
        <WindowButton aria-label="Minimize">
          <svg width="10" height="10" stroke="#000"><path d="M0 5.500H10" /></svg>
        </WindowButton>
        <WindowButton aria-label="Restore">
          <svg width="10" height="10" stroke="#000" fill="none"><path d="M0.500 2.500H7.500V9.500H0.500ZM2.500 2.500V0.500H9.500V7.500H7.500" /></svg>
        </WindowButton>
        <WindowButton aria-label="Close">
          <svg width="10" height="10" stroke="#000"><path d="M0 0L10 10M10 0L0 10" /></svg>
        </WindowButton>
      </TitleBar>
      <MenuBar>
        {["File", "Edit", "View", "Profile", "Scene Collection", "Tools", "Help"].map((m) => <MenuItem key={m}>{m}</MenuItem>)}
      </MenuBar>

      <Preview>
        <Canvas>
          <IconGrid>
            {desktopItems.map(([label, kind, link], i) => (
              <IconCell key={i}>
                <svg width="34" height="34" viewBox="0 0 34 34">
                  {picture(kind)}
                  {link ? <ShortcutArrow /> : null}
                </svg>
                {label}
              </IconCell>
            ))}
          </IconGrid>
          <Watermark>{"Test Mode\nWindows 10 Pro Insider Preview\nEvaluation copy. Build 21337.rs_prerelease.210312-1502"}</Watermark>

          <CameraWindow>
            <CameraTop>
              <CameraTitle>
                <Grow>Camera</Grow>
                <WindowButton $small aria-label="Minimize camera"><svg width="8" height="8" stroke="#ddd"><path d="M0 4.500H8" /></svg></WindowButton>
                <WindowButton $small aria-label="Maximize camera"><svg width="8" height="8" stroke="#ddd" fill="none"><path d="M0.500 0.500H7.500V7.500H0.500Z" /></svg></WindowButton>
                <WindowButton $small aria-label="Close camera"><svg width="8" height="8" stroke="#ddd"><path d="M0 0L8 8M8 0L0 8" /></svg></WindowButton>
              </CameraTitle>
              <GearSlot aria-label="Camera settings"><ThinGear /></GearSlot>
            </CameraTop>
            <CameraSide $left>
              <SideButton aria-label="HDR">
                <svg width="16" height="14" viewBox="0 0 16 14" fill="none" stroke="#c8c8c8">
                  <path d="M0.700 1H14.500V7M0.700 1V10.500H8" />
                  <path d="M3 3.500V7.500M3 5.500H5.500M5.500 3.500V7.500M7.500 4V7M8 3.700Q10 5.500 8 7.300M11.500 7.500V4H13V5.500L11.500 6" />
                  <circle cx="11.500" cy="10.500" r="2.7" fill="#777" />
                </svg>
              </SideButton>
              <SideButton aria-label="Photo timer">
                <svg width="16" height="16" viewBox="0 0 16 16" fill="none" stroke="#c8c8c8" strokeWidth="1.3">
                  <path d="M10.500 8A4.700 4.700 0 1 0 6 12.300M6 0V3M4 0.800H8M6 5V8" />
                  <circle cx="11.500" cy="11.500" r="3" fill="#777" />
                </svg>
              </SideButton>
            </CameraSide>
            <ColourBars>{bars.map(([w, c], i) => <Bar key={i} $w={w} $c={c} />)}</ColourBars>
            <CameraSide>
              <Spacer $h={127} />
              <SideButton aria-label="Previous mode"><Chevron w={14} h={8} stroke={1.3} color="#ccc" /></SideButton>
              <Spacer $h={77} />
              <SideButton aria-label="Video">
                <svg width="18" height="10" viewBox="0 0 18 10" fill="none" stroke="#8c8c8c"><path d="M0.500 0.500H12.500V9.500H0.500ZM12.500 4L17 1V9L12.500 6" /></svg>
              </SideButton>
              <Tooltip>Take Photo</Tooltip>
              <Shutter aria-label="Take photo"><CameraGlyph /></Shutter>
              <Spacer $h={116} />
              <SideButton aria-label="Next mode"><Chevron w={14} h={8} stroke={1.3} down color="#555" /></SideButton>
              <Spacer $h={119} />
              <Thumb aria-label="Open camera roll">
                <svg width="12" height="12" viewBox="0 0 12 12"><path d="M0.500 0.500H11.500V11.500H0.500Z" fill="none" stroke="#eee" /><path d="M1 8L4 3.500L6.500 7L8 5L11 8V11H1Z" fill="#fff" /></svg>
              </Thumb>
            </CameraSide>
          </CameraWindow>
          <Pointer width="10" height="14" viewBox="0 0 10 14"><path d="M1 0.500V11L3.500 8.500L5.500 13L7.200 12.200L5.300 8H9Z" fill="#fff" stroke="#333" strokeWidth="0.7" /></Pointer>

          <InnerTaskbar>
            <InnerStart aria-label="Inner start"><WinLogo size={12} color="#f0f4f4" /></InnerStart>
            <InnerSearch>
              <SearchGlyph size={12} color="#cfdcdc" />
              <InnerInput aria-label="Search the captured desktop" placeholder="Type here to search" />
            </InnerSearch>
            <InnerItem aria-label="Cortana"><svg width="12" height="12"><circle cx="6" cy="6" r="4.6" fill="none" stroke="#dde6e8" strokeWidth="1.6" /></svg></InnerItem>
            <InnerItem aria-label="Inner task view"><TaskView size={12} color="#cdd" /></InnerItem>
            {[EdgeIcon, FolderIcon, StoreIcon, PyFileIcon, MonitorIcon, TerminalIcon, VsIcon, PuttyIcon].map((Icon, i) => (
              <InnerItem key={i}><Icon size={17} /></InnerItem>
            ))}
            <InnerItem aria-label="Shell">
              <svg width="17" height="17" viewBox="0 0 17 17"><path d="M0 1H17V16H0Z" fill="#303030" /><path d="M0 1H17V3.500H0Z" fill="#b0b0b0" /><path d="M3 6L7 9.500L3 13M9 13H14" stroke="#e8e8e8" strokeWidth="1.5" fill="none" /></svg>
            </InnerItem>
            <InnerItem $active aria-label="Camera app">
              <svg width="17" height="17" viewBox="0 0 17 17"><path d="M0 4H4L5 2H12L13 4H17V15H0Z" fill="#6a7478" /><circle cx="8.500" cy="9" r="4.5" fill="#d8e4ec" /><circle cx="8.500" cy="9" r="3" fill="#6a62c8" /></svg>
            </InnerItem>
            <InnerTray>
              <Chevron w={9} h={7} stroke={1.2} color="#cfdcdc" />
              <TraySound size={12} color="#dfe8ea" />
              <TrayNet size={12} color="#dfe8ea" />
              <InnerClock>{"21:05\n21/11/2021"}</InnerClock>
              <InnerNote><TrayNote size={12} /></InnerNote>
            </InnerTray>
          </InnerTaskbar>
        </Canvas>
      </Preview>

      <ContextBar>
        <ContextLabel>No source selected</ContextLabel>
        <Divider />
        <ContextButton><GearIcon />Properties</ContextButton>
        <ContextButton>
          <svg width="17" height="16" viewBox="0 0 17 16">
            <circle cx="6.500" cy="6.500" r="6.5" fill="#d2d2d2" />
            <path d="M4 7L8 3M5 10L10 5M7 12L12 7" stroke="#555" strokeWidth="1.2" />
            <circle cx="10" cy="10" r="5.3" fill="none" stroke="#d2d2d2" strokeWidth="1.3" strokeDasharray="1.5 1.5" />
          </svg>
          Filters
        </ContextButton>
        <Divider />
      </ContextBar>

      <Docks>
        <Dock>
          <DockHeader>Scenes</DockHeader>
          <ListBox>
            <ListArea>
              <List>
                {["Desktop", "Unity", "Game", "Blank", "Xbox", "Webcam"].map((s) => <SceneItem key={s} $on={s === "Xbox"}>{s}</SceneItem>)}
              </List>
              <ScrollTrack><ScrollThumb /></ScrollTrack>
            </ListArea>
            <Toolbar>
              <ToolButton aria-label="Add scene"><PlusIcon /></ToolButton>
              <ToolButton aria-label="Remove scene"><PlusIcon minus /></ToolButton>
              <ToolSep />
              <ToolButton aria-label="Move scene up"><Chevron /></ToolButton>
              <ToolButton aria-label="Move scene down"><Chevron down /></ToolButton>
            </Toolbar>
          </ListBox>
        </Dock>
        <Dock>
          <DockHeader>Sources</DockHeader>
          <ListBox>
            <ListArea>
              <List>
                <SourceRow>
                  <svg width="16" height="12" viewBox="0 0 16 12">
                    <path d="M0 0H6V1H16V12H0Z" fill="#d2d2d2" />
                    <circle cx="10.500" cy="6.500" r="3" fill="none" stroke="#1f1e1f" strokeWidth="1.3" />
                    <path d="M1 2.500H5" stroke="#1f1e1f" />
                  </svg>
                  <SourceName>Blackmagic Device</SourceName>
                  <SideButton aria-label="Toggle visibility">
                    <svg width="16" height="11" viewBox="0 0 16 11"><path d="M0 5.500Q8 -5.500 16 5.500Q8 16.500 0 5.500Z" fill="#d2d2d2" /><circle cx="8" cy="5.500" r="4" fill="#1f1e1f" /><circle cx="8" cy="5.500" r="2" fill="#d2d2d2" /></svg>
                  </SideButton>
                  <SideButton aria-label="Lock source">
                    <svg width="14" height="14" viewBox="0 0 14 14"><path d="M1 6H13V14H1Z" fill="#7a7a7a" /><path d="M4 3.500Q4 1 7 1T10.500 4V6" fill="none" stroke="#7a7a7a" strokeWidth="1.8" /></svg>
                  </SideButton>
                </SourceRow>
              </List>
            </ListArea>
            <Toolbar>
              <ToolButton aria-label="Add source"><PlusIcon /></ToolButton>
              <ToolButton aria-label="Remove source"><PlusIcon minus /></ToolButton>
              <ToolButton aria-label="Source properties"><GearIcon /></ToolButton>
              <ToolSep />
              <ToolButton aria-label="Move source up"><Chevron /></ToolButton>
              <ToolButton aria-label="Move source down"><Chevron down /></ToolButton>
            </Toolbar>
          </ListBox>
        </Dock>
        <Dock>
          <DockHeader>Audio Mixer</DockHeader>
          <Mixer>
            <Channels>
              {channels.map((c) => <MixerChannel key={c.name} {...c} />)}
              <Channel><ChannelHead><span>Mic/Aux</span><span>0.0 dB</span></ChannelHead></Channel>
            </Channels>
            <MixerThumb />
          </Mixer>
        </Dock>
        <Dock>
          <DockHeader>Scene Transitions</DockHeader>
          <Panel>
            <PanelRow $gap={5}>
              <SelectWrap>
                <Select aria-label="Transition" defaultValue="Fade"><option>Fade</option></Select>
                <SelectArrows><Chevron w={6} h={4} stroke={1} /><Chevron w={6} h={4} stroke={1} down /></SelectArrows>
              </SelectWrap>
              <DarkButton aria-label="Transition properties"><GearIcon /></DarkButton>
            </PanelRow>
            <PanelRow $gap={2}>
              <label htmlFor="duration">Duration</label>
              <Duration>
                <DurationInput id="duration" type="text" defaultValue="500 ms" />
                <Spin>
                  <SpinButton aria-label="Increase"><Chevron w={10} h={6} stroke={2} /></SpinButton>
                  <SpinButton aria-label="Decrease"><Chevron w={10} h={6} stroke={2} down /></SpinButton>
                </Spin>
              </Duration>
            </PanelRow>
          </Panel>
        </Dock>
        <Dock>
          <DockHeader>Controls</DockHeader>
          <Panel>
            {["Start Streaming", "Start Recording", "Start Virtual Camera", "Studio Mode", "Settings", "Exit"].map((b) => (
              <ControlButton key={b}>{b}</ControlButton>
            ))}
          </Panel>
        </Dock>
      </Docks>

      <StatusBar>
        <StatusItem $after={14}>
          <svg width="20" height="14" viewBox="-10 -7 20 14" fill="none" stroke="#8a8a8a" strokeWidth="1.2">
            <circle r="3.8" fill="#8a8a8a" stroke="none" />
            <path d="M-5 -4.500Q-7 0 -5 4.500M5 -4.500Q7 0 5 4.500M-7.500 -6.500Q-11 0 -7.500 6.500M7.500 -6.500Q11 0 7.500 6.500" />
          </svg>
          LIVE: 00:00:00
        </StatusItem>
        <StatusItem $gap={10} $after={28}>
          <svg width="10" height="10"><circle cx="5" cy="5" r="5" fill="#999" /></svg>
          REC: 00:00:00
        </StatusItem>
        <StatusItem>CPU: 1.2%, 60.00 fps</StatusItem>
      </StatusBar>

      <Taskbar>
        <StartButton aria-label="Start"><WinLogo /></StartButton>
        <Search>
          <SearchGlyph />
          <SearchInput aria-label="Search" placeholder="Type here to search" />
        </Search>
        <StartButton aria-label="Task view"><TaskView /></StartButton>
        <Pins>
          {pins.map(([name, icon, state]) => <Pin key={name} aria-label={name} $state={state}>{icon}</Pin>)}
        </Pins>
        <Tray>
          <TrayButton aria-label="Show hidden icons"><Chevron w={13} h={8} stroke={1.3} color="#fff" /></TrayButton>
          <TrayButton aria-label="Network"><TrayNet /></TrayButton>
          <TrayButton aria-label="USB">
            <svg width="14" height="17" viewBox="0 0 14 17" fill="none" stroke="#fff"><path d="M2.500 5V0.500H8.500V5M8 15.500H1.500V5.500H9.500V11M4 3V4M7 3V4" /><path d="M7 13L9 15.500L13 11" stroke="#aaa" /></svg>
          </TrayButton>
          <TrayButton aria-label="Volume"><TraySound /></TrayButton>
          <TrayButton $w={36}>ENG</TrayButton>
          <Clock>{"21:05\n21/11/2021"}</Clock>
          <TrayButton $w={44} aria-label="Notifications"><TrayNote /></TrayButton>
          <ShowDesktop aria-label="Show desktop" />
        </Tray>
      </Taskbar>
    </Screen>
  );
}
